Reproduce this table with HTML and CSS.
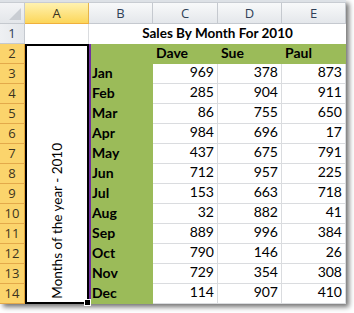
FILE: index.html
```html
<!DOCTYPE html>
<html>
<head>
<meta charset="utf-8">
<link rel="stylesheet" href="styles.css">
</head>
<body>
<div class="frame">
  <div class="topstrip"></div>
  <div class="sheet">
    <div class="corner"><span class="tri"></span></div>
    <div class="colhead sel">A</div>
    <div class="colhead">B</div>
    <div class="colhead">C</div>
    <div class="colhead">D</div>
    <div class="colhead">E</div>

    <div class="rowhead">1</div>
    <div class="cell a1"></div>
    <div class="cell title">Sales By Month For 2010</div>

    <div class="rowhead sel">2</div>
    <div class="merged"><span class="vtext">Months of the year - 2010</span><span class="handle"></span></div>
    <div class="green month"></div>
    <div class="green name">Dave</div>
    <div class="green name">Sue</div>
    <div class="green name">Paul</div>

    <div class="rowhead sel">3</div>
    <div class="green month">Jan</div><div class="cell num">969</div><div class="cell num">378</div><div class="cell num">873</div>
    <div class="rowhead sel">4</div>
    <div class="green month">Feb</div><div class="cell num">285</div><div class="cell num">904</div><div class="cell num">911</div>
    <div class="rowhead sel">5</div>
    <div class="green month">Mar</div><div class="cell num">86</div><div class="cell num">755</div><div class="cell num">650</div>
    <div class="rowhead sel">6</div>
    <div class="green month">Apr</div><div class="cell num">984</div><div class="cell num">696</div><div class="cell num">17</div>
    <div class="rowhead sel">7</div>
    <div class="green month">May</div><div class="cell num">437</div><div class="cell num">675</div><div class="cell num">791</div>
    <div class="rowhead sel">8</div>
    <div class="green month">Jun</div><div class="cell num">712</div><div class="cell num">957</div><div class="cell num">225</div>
    <div class="rowhead sel">9</div>
    <div class="green month">Jul</div><div class="cell num">153</div><div class="cell num">663</div><div class="cell num">718</div>
    <div class="rowhead sel">10</div>
    <div class="green month">Aug</div><div class="cell num">32</div><div class="cell num">882</div><div class="cell num">41</div>
    <div class="rowhead sel">11</div>
    <div class="green month">Sep</div><div class="cell num">889</div><div class="cell num">996</div><div class="cell num">384</div>
    <div class="rowhead sel">12</div>
    <div class="green month">Oct</div><div class="cell num">790</div><div class="cell num">146</div><div class="cell num">26</div>
    <div class="rowhead sel">13</div>
    <div class="green month">Nov</div><div class="cell num">729</div><div class="cell num">354</div><div class="cell num">308</div>
    <div class="rowhead sel">14</div>
    <div class="green month">Dec</div><div class="cell num">114</div><div class="cell num">907</div><div class="cell num">410</div>
  </div>
</div>
</body>
</html>
```
FILE: styles.css
```css
html, body {
  margin: 0;
  padding: 0;
  background: #ffffff;
}
body {
  width: 354px;
  height: 313px;
  overflow: hidden;
  font-family: Lato, "Open Sans", sans-serif;
}
.frame {
  width: 346px;
  box-shadow: 3px 3px 5px rgba(0, 0, 0, 0.55);
}
.topstrip {
  height: 2px;
  background: #dde1e6;
  border-bottom: 1px solid #c8ccd2;
}
.sheet {
  display: grid;
  grid-template-columns: 25px 64px 64px 65px 64px 64px;
  grid-template-rows: 21px repeat(14, 20px);
  background: #ffffff;
}
.sheet > div {
  box-sizing: border-box;
  font-size: 14px;
  line-height: 1;
}
.corner {
  position: relative;
  background: linear-gradient(#f3f4f6, #e3e6ea);
  border-right: 1px solid #c5c9cf;
  border-bottom: 1px solid #c5c9cf;
}
.tri {
  position: absolute;
  right: 3px;
  bottom: 3px;
  width: 0;
  height: 0;
  border-left: 12px solid transparent;
  border-bottom: 12px solid #c9cdd3;
}
.colhead {
  display: flex;
  align-items: center;
  justify-content: center;
  color: #2f3f57;
  font-family: "Open Sans", sans-serif;
  font-size: 13px !important;
  background: linear-gradient(#f8f9fa, #e4e7eb);
  border-right: 1px solid #c5c9cf;
  border-bottom: 1px solid #c5c9cf;
  padding-top: 1px;
}
.colhead.sel {
  background: linear-gradient(#fff2b0, #fcd65a);
  border-right: 1px solid #e6b44a;
  border-bottom: 1px solid #f0b03c;
  color: #3a3320;
}
.rowhead {
  grid-column: 1;
  display: flex;
  align-items: center;
  justify-content: center;
  color: #2f3f57;
  font-family: "Open Sans", sans-serif;
  font-size: 13px !important;
  background: linear-gradient(90deg, #eef0f3, #e4e7eb);
  border-right: 1px solid #c5c9cf;
  border-bottom: 1px solid #c5c9cf;
}
.rowhead.sel {
  background: #fbd46c;
  border-right: 1px solid #e2a33b;
  border-bottom: 1px solid #e3a94a;
  color: #3a3320;
}
.cell {
  border-right: 1px solid #dadcdf;
  border-bottom: 1px solid #dadcdf;
  color: #000;
}
.a1 {
  border-bottom: none;
}
.title {
  grid-column: 3 / span 4;
  display: flex;
  align-items: flex-end;
  justify-content: center;
  padding-bottom: 4px;
  font-weight: bold;
  font-size: 13.5px !important;
  border-right: none;
  border-bottom: none;
}
.merged {
  position: relative;
  grid-column: 2;
  grid-row: 3 / span 13;
  border: 2px solid #000;
  display: flex;
  align-items: flex-end;
  justify-content: center;
  padding-bottom: 3px;
}
.vtext {
  writing-mode: vertical-rl;
  transform: rotate(180deg);
  font-size: 13.5px;
  padding-right: 1px;
}
.handle {
  position: absolute;
  right: -4px;
  bottom: -4px;
  width: 5px;
  height: 5px;
  background: #000;
  border: 1px solid #fff;
}
.green {
  background: #9bbb59;
  display: flex;
  align-items: flex-end;
  padding-bottom: 4px;
  font-weight: bold;
  color: #000;
}
.month {
  grid-column: 3;
  border-left: 2px solid #7030a0;
  padding-left: 1px;
}
.name {
  padding-left: 3px;
}
.num {
  display: flex;
  align-items: flex-end;
  justify-content: flex-end;
  padding-right: 3px;
  padding-bottom: 4px;
}
```
